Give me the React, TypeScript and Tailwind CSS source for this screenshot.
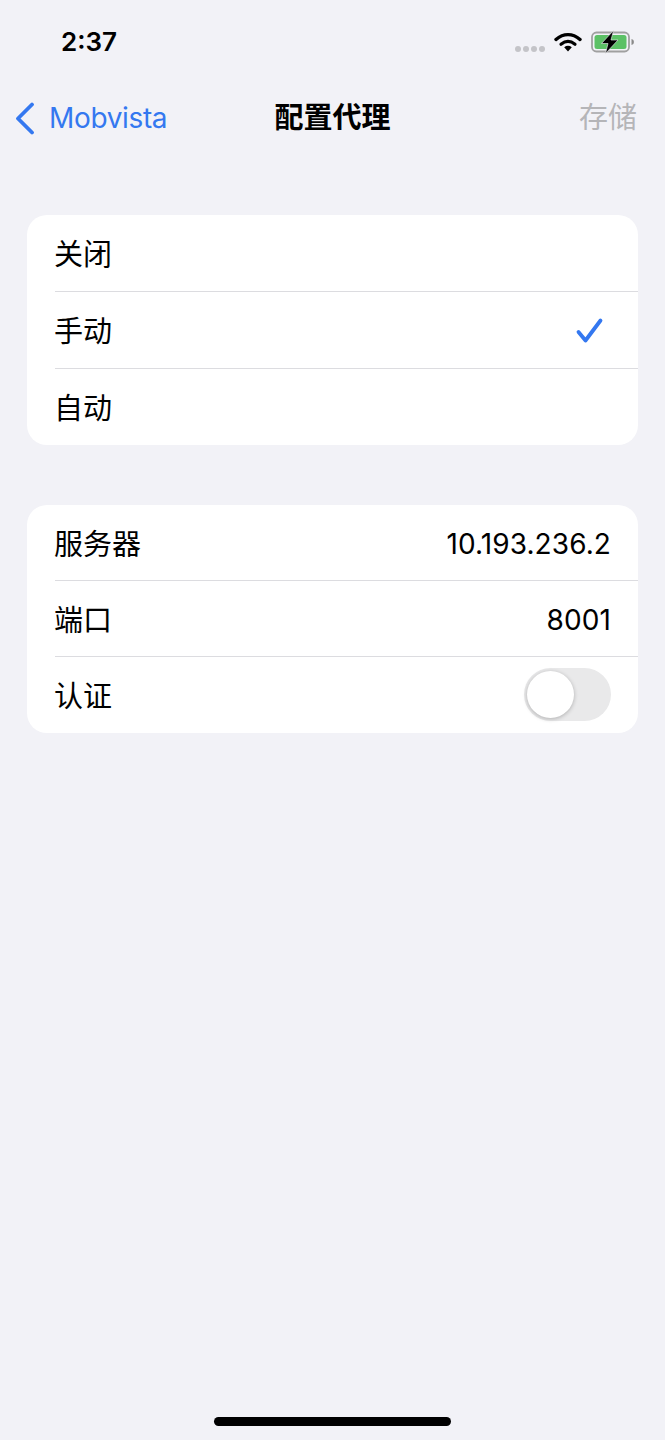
import React from 'react';

const font = { fontFamily: '"Inter", "Noto Sans CJK SC", sans-serif' };

function StatusIcons() {
  return (
    <div className="flex items-center">
      {/* Signal dots */}
      <div className="flex gap-[2px] mt-[13px] mr-[9px]">
        <span className="w-[6px] h-[6px] rounded-full bg-[#c4c4c8]" />
        <span className="w-[6px] h-[6px] rounded-full bg-[#c4c4c8]" />
        <span className="w-[6px] h-[6px] rounded-full bg-[#c4c4c8]" />
        <span className="w-[6px] h-[6px] rounded-full bg-[#c4c4c8]" />
      </div>
      {/* Wifi */}
      <svg width="28" height="20" viewBox="0 0 28 20" className="mr-[9px]">
        <path d="M2 7.5C9.5 1 18.5 1 26 7.5" fill="none" stroke="#000" strokeWidth="3.4" strokeLinecap="round" />
        <path d="M7 12.2C11.5 8.6 16.5 8.6 21 12.2" fill="none" stroke="#000" strokeWidth="3.2" strokeLinecap="round" />
        <path d="M10.2 15.2C12.6 13.4 15.4 13.4 17.8 15.2L14 19.5Z" fill="#000" />
      </svg>
      {/* Battery, charging */}
      <svg width="44" height="24" viewBox="0 0 44 24">
        <rect x="1" y="2.5" width="37" height="19" rx="4.5" fill="none" stroke="#a0a0a0" strokeWidth="1.8" />
        <rect x="3.5" y="5" width="32" height="14" rx="2.5" fill="#5cc166" />
        <path d="M40.5 9v6c1.6-.4 2.4-1.5 2.4-3s-.8-2.6-2.4-3Z" fill="#8a8a8a" />
        <path d="M22.5 0.5 10.5 13.5H17L14.5 23.5 27 10H20Z" fill="#000" stroke="#f2f2f7" strokeWidth="0.6" />
      </svg>
    </div>
  );
}

function OptionRow({ label, checked }: { label: string; checked?: boolean }) {
  return (
    <div className="flex items-center justify-between h-[76px] pl-[27px]">
      <span className="pt-[4px] text-[29px] text-black">{label}</span>
      {checked && (
        <svg width="30" height="28" viewBox="0 0 30 28" className="mr-[33px]">
          <path d="M3.5 16 10.5 24.5 25.5 4.5" fill="none" stroke="#3478f0" strokeWidth="3.8" strokeLinecap="round" strokeLinejoin="round" />
        </svg>
      )}
    </div>
  );
}

function Divider() {
  return <div className="h-px ml-[28px] bg-[#dcdce0]" />;
}

function ValueRow({ label, value }: { label: string; value: string }) {
  return (
    <div className="flex items-center justify-between h-[75px] pl-[27px] pr-[27px]">
      <span className="pt-[4px] text-[29px] text-black">{label}</span>
      <span className="pt-[2px] text-[28px] tracking-[0.1px] text-black">{value}</span>
    </div>
  );
}

export default function App() {
  return (
    <div className="flex flex-col h-[1440px] bg-[#f2f2f7]" style={font}>
      {/* Status bar */}
      <div className="flex items-center justify-between h-[84px] pl-[61px] pr-[30px]">
        <span className="pb-[2px] text-[26px] font-semibold text-black">2:37</span>
        <StatusIcons />
      </div>

      {/* Navigation bar */}
      <div className="grid grid-cols-[1fr_auto_1fr] items-center h-[68px] px-[15px]">
        <div className="flex items-center">
          <svg width="20" height="33" viewBox="0 0 20 33">
            <path d="M17 2.5 3 16.5l14 14" fill="none" stroke="#3478f0" strokeWidth="3.8" strokeLinecap="round" strokeLinejoin="round" />
          </svg>
          <span className="ml-[14px] text-[28px] tracking-[-0.35px] text-[#3478f0]">Mobvista</span>
        </div>
        <span className="text-[29px] font-semibold text-black">配置代理</span>
        <span className="pr-[13px] text-[29px] text-right text-[#b5b5b8]">存储</span>
      </div>

      {/* Proxy mode */}
      <div className="mt-[63px] mx-[27px] rounded-[20px] bg-white overflow-hidden">
        <OptionRow label="关闭" />
        <Divider />
        <OptionRow label="手动" checked />
        <Divider />
        <OptionRow label="自动" />
      </div>

      {/* Proxy server */}
      <div className="mt-[60px] mx-[27px] rounded-[20px] bg-white overflow-hidden">
        <ValueRow label="服务器" value="10.193.236.2" />
        <Divider />
        <ValueRow label="端口" value="8001" />
        <Divider />
        <div className="flex items-center justify-between h-[76px] pl-[27px] pr-[27px]">
          <span className="pt-[4px] text-[29px] text-black">认证</span>
          <div className="flex items-center w-[87px] h-[53px] -mt-[2px] p-[3px] rounded-full bg-[#e9e9ea]">
            <div className="w-[47px] h-[47px] rounded-full bg-white shadow-[0_1px_4px_rgba(0,0,0,0.25)]" />
          </div>
        </div>
      </div>

      {/* Home indicator */}
      <div className="mt-auto mb-[14px] mx-auto w-[237px] h-[9px] rounded-full bg-black" />
    </div>
  );
}
